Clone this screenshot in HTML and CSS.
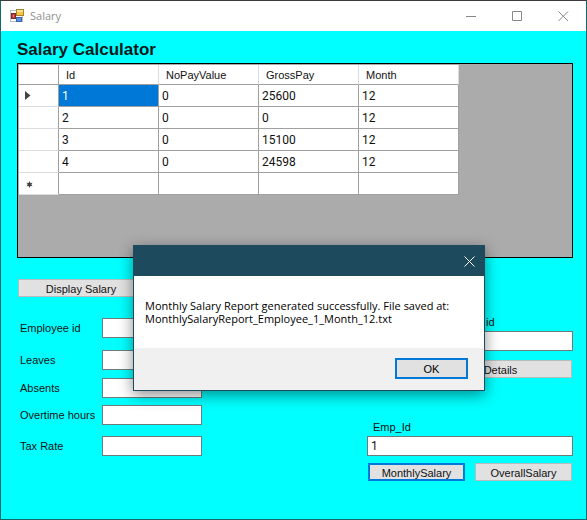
FILE: index.html
```html
<!DOCTYPE html>
<html lang="en">
<head>
<meta charset="utf-8">
<title>Salary</title>
<link rel="stylesheet" href="styles.css">
</head>
<body>
<div class="window">
  <header class="titlebar">
    <svg class="app-icon" width="14" height="14" viewBox="0 0 14 14" aria-hidden="true">
      <rect x=".5" y="1.5" width="12" height="11" fill="#fff" stroke="#b8bcc0"/>
      <rect x="6.500" y=".5" width="7" height="6" fill="#f8c63c" stroke="#a88432"/>
      <rect x="7" y="1" width="6" height="2" fill="#ffe48c"/>
      <rect x="1.500" y="4.500" width="4" height="5" fill="#c23a2c" stroke="#7c2c2c"/>
      <rect x="3" y="6" width="1" height="2" fill="#e88c7c"/>
      <rect x="6.500" y="8.500" width="5" height="4" fill="#5c94e4" stroke="#3c64ac"/>
    </svg>
    <h2 class="window-name">Salary</h2>
    <div class="window-controls">
      <button type="button" aria-label="Minimize"><svg width="11" height="11" viewBox="0 0 11 11"><path d="M0 5.500H10"/></svg></button>
      <button type="button" aria-label="Maximize"><svg width="11" height="11" viewBox="0 0 11 11"><path d="M.5 .5H9.500V9.500H.5Z"/></svg></button>
      <button type="button" aria-label="Close"><svg width="11" height="11" viewBox="0 0 11 11"><path d="M.5 .5L10 10M10 .5L.5 10"/></svg></button>
    </div>
  </header>

  <main class="content">
    <h1>Salary Calculator</h1>

    <div class="grid-view">
      <table>
        <thead>
          <tr><th class="marker"></th><th>Id</th><th>NoPayValue</th><th>GrossPay</th><th>Month</th></tr>
        </thead>
        <tbody>
          <tr><td class="marker"><svg width="6" height="9" viewBox="0 0 6 9"><path d="M0 0L5.500 4.500L0 9Z"/></svg></td><td class="selected">1</td><td>0</td><td>25600</td><td>12</td></tr>
          <tr><td class="marker"></td><td>2</td><td>0</td><td>0</td><td>12</td></tr>
          <tr><td class="marker"></td><td>3</td><td>0</td><td>15100</td><td>12</td></tr>
          <tr><td class="marker"></td><td>4</td><td>0</td><td>24598</td><td>12</td></tr>
          <tr><td class="marker"><svg class="new-row" width="7" height="7" viewBox="0 0 7 7"><circle cx="3.500" cy="3.500" r="2"/><path class="star" d="M3.500 .5V6.500M.8 2L6.200 5M6.200 2L.8 5"/></svg></td><td></td><td></td><td></td><td></td></tr>
        </tbody>
      </table>
    </div>

    <button type="button" class="button display">Display Salary</button>

    <div class="panels">
      <form class="fields">
        <label for="employee">Employee id</label><input id="employee" type="text">
        <label for="leaves">Leaves</label><input id="leaves" type="text">
        <label for="absents">Absents</label><input id="absents" type="text">
        <label for="overtime">Overtime hours</label><input id="overtime" type="text">
        <label for="tax">Tax Rate</label><input id="tax" type="text">
      </form>

      <div class="reports">
        <form class="lookup">
          <label for="lookup-id">Employee id</label>
          <input id="lookup-id" type="text">
          <button type="button" class="button">View Salary Details</button>
        </form>
        <form class="report">
          <label for="report-id">Emp_Id</label>
          <input id="report-id" type="text" value="1">
          <div class="actions">
            <button type="button" class="button focused">MonthlySalary</button>
            <button type="button" class="button">OverallSalary</button>
          </div>
        </form>
      </div>
    </div>
  </main>

  <section class="dialog" role="dialog" aria-describedby="message">
    <header class="dialog-bar">
      <button type="button" aria-label="Close"><svg width="11" height="11" viewBox="0 0 11 11"><path d="M.5 .5L10.500 10.500M10.500 .5L.5 10.500"/></svg></button>
    </header>
    <p id="message">Monthly Salary Report generated successfully. File saved at:<br>MonthlySalaryReport_Employee_1_Month_12.txt</p>
    <footer><button type="button" class="ok">OK</button></footer>
  </section>
</div>
</body>
</html>
```
FILE: styles.css
```css
* { box-sizing: border-box; }

body {
  margin: 0;
  font: 11px/14px "Liberation Sans", Arial, sans-serif;
  color: #111;
}

h1, h2, p { margin: 0; }

button, input { font: inherit; color: inherit; border-radius: 0; }

.window {
  position: relative;
  display: flex;
  flex-direction: column;
  min-height: 100vh;
  border: 1px solid #14666c;
  border-top-color: #3c383c;
  background: #0ff;
}

.titlebar {
  display: flex;
  align-items: center;
  height: 30px;
  padding-left: 9px;
  background: #fff;
}

.window-name {
  flex: 1;
  margin-left: 6px;
  font: 11px/16px "Open Sans", "Noto Sans", sans-serif;
  color: #909090;
}

.window-controls { display: flex; }

.window-controls button,
.dialog-bar button {
  display: flex;
  align-items: center;
  justify-content: center;
  width: 46px;
  height: 30px;
  padding: 0;
  border: 0;
  background: none;
}

.window-controls path { fill: none; stroke: #888; }

.content { padding: 10px 13px 0 16px; }

h1 {
  font: bold 17px/18px "Liberation Sans", Arial, sans-serif;
  color: #061818;
}

.grid-view {
  height: 195px;
  margin-top: 4px;
  padding: 1px;
  border: 1px solid #000;
  background: #ababab;
}

table { border-collapse: separate; border-spacing: 0; table-layout: fixed; width: 440px; background: #fff; }

th, td {
  width: 100px;
  height: 22px;
  padding: 0 3px;
  border-right: 1px solid #a0a0a0;
  border-bottom: 1px solid #a0a0a0;
  text-align: left;
  font-weight: 400;
}

td { font-family: Roboto, "Liberation Sans", sans-serif; font-size: 12px; }
th { height: 20px; padding-left: 7px; border-right-color: #d8dce0; }

.marker { width: 40px; padding: 0 0 0 6px; border-bottom-color: #dcdcdc; }
th.marker { border-bottom-color: #a0a0a0; border-right-color: #a0a0a0; }
.marker svg { display: block; fill: #444; }
.marker .new-row { margin: 2px 0 0 1px; }
.marker .star { fill: none; stroke: #444; }
.selected { background: #0078d7; color: #fff; }

.button {
  height: 18px;
  padding: 1px 0 0;
  border: 1px solid #b4bcbc;
  background: #e1e1e1;
  line-height: 14px;
}

.button.focused { border: 2px solid #0078d7; }

.display { display: block; width: 126px; margin: 21px 0 0 1px; }

.panels { display: flex; justify-content: space-between; margin-top: 16px; }

.fields {
  display: grid;
  grid-template-columns: 82px 100px;
  grid-template-rows: 32px 28px 27px 31px 20px;
  margin-top: 5px;
  padding-left: 3px;
}

.fields label { line-height: 20px; }

input[type="text"] {
  width: 100%;
  height: 20px;
  padding: 0 3px;
  border: 1px solid #6c7c7c;
  background: #fff;
  font-family: Roboto, "Liberation Sans", sans-serif;
  font-size: 12px;
  outline: 0;
}

.reports { width: 206px; }

form label { white-space: nowrap; }

.lookup, .report { display: flex; flex-direction: column; }
.lookup label { margin: 2px 0 2px 67px; }
.lookup .button { margin: 9px 1px 0; }
.report { margin-top: 42px; }
.report label { margin: 0 0 2px 6px; }
.actions { display: grid; grid-template-columns: 1fr 1fr; gap: 10px; margin: 7px 1px 0; }

.dialog {
  position: absolute;
  top: 244px;
  left: 132px;
  width: 352px;
  border: 1px solid #1d4a5c;
  background: #fff;
  box-shadow: 0 4px 14px rgba(0, 0, 0, .45);
  color: #000;
}

.dialog-bar { display: flex; justify-content: flex-end; height: 30px; background: #1d4a5c; }
.dialog-bar button { width: 30px; }
.dialog-bar path { fill: none; stroke: #fff; }

.dialog p {
  padding: 23px 11px;
  font: 11px/13px "Open Sans", "Noto Sans", sans-serif;
}

.dialog footer {
  display: flex;
  justify-content: flex-end;
  padding: 10px 16px 11px;
  background: #f0f0f0;
}

.ok {
  width: 73px;
  height: 21px;
  padding: 0;
  border: 2px solid #0078d7;
  background: #e1e1e1;
}
```
